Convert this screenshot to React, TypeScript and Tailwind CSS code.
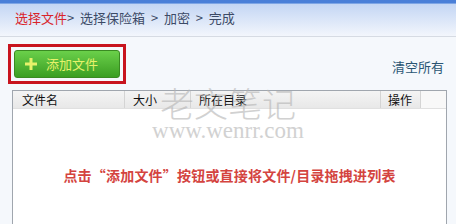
import React from "react";

const font = { fontFamily: '"Noto Sans CJK SC", "Noto Sans", sans-serif' };

function PlusIcon() {
  return (
    <svg width="12" height="12" viewBox="0 0 12 12" className="shrink-0">
      <rect x="4.5" y="0" width="3" height="12" fill="#e6f26a" />
      <rect x="0" y="4.5" width="12" height="3" fill="#e6f26a" />
    </svg>
  );
}

export default function App() {
  return (
    <div
      className="relative w-[456px] h-[224px] overflow-hidden bg-[#f5f8fc] flex flex-col"
      style={font}
    >
      {/* breadcrumb */}
      <div className="h-[37px] shrink-0 flex items-center pl-[15px] text-[13px] whitespace-pre bg-gradient-to-b from-[#4a7fd8] from-[8%] via-[#c4d6f4] via-[12%] to-[#f3f6fc] border-b border-[#d6dbe3]">
        <span className="text-[#d9242b]">选择文件</span>
        <span className="text-[#3c4a66]">&gt;  选择保险箱  &gt;  加密  &gt;  完成</span>
      </div>

      {/* toolbar */}
      <div className="h-[53px] shrink-0 flex items-center justify-between pl-[8px] pr-[12px]">
        <div className="border-[3px] border-[#c8141e] p-[3px] w-[118px] h-[40px] flex">
          <button className="flex-1 flex items-center gap-[9px] pl-[10px] rounded-[3px] bg-gradient-to-b from-[#6ad04a] to-[#3b9e22] border border-[#3a8a22] text-[13px] text-[#e6f26a]">
            <PlusIcon />
            添加文件
          </button>
        </div>
        <span className="text-[13px] text-[#2a5573] mt-[6px]">清空所有</span>
      </div>

      {/* file list */}
      <div className="flex-1 ml-[12px] mr-[9px] border border-b-0 border-[#a0a6ae] bg-white flex flex-col">
        <div className="h-[18px] shrink-0 flex text-[12px] text-[#111] bg-gradient-to-b from-[#f4f4f4] to-[#e8e8e8] border-b border-[#e0e0e0] leading-[18px]">
          <div className="w-[112px] pl-[9px] border-r border-[#d4d4d4]">文件名</div>
          <div className="w-[66px] pl-[8px] border-r border-[#d4d4d4]">大小</div>
          <div className="w-[190px] pl-[8px] border-r border-[#d4d4d4]">所在目录</div>
          <div className="w-[40px] pl-[7px] border-r border-[#d4d4d4]">操作</div>
          <div className="flex-1 bg-[#f8f8f8]" />
        </div>
        <div className="flex-1 flex justify-center pt-[56px]">
          <span className="text-[14px] font-bold text-[#d4443f] tracking-[0.2px]">
            点击“添加文件”按钮或直接将文件/目录拖拽进列表
          </span>
        </div>
      </div>

      {/* watermark */}
      <div className="absolute left-[148px] top-[84px] w-[160px] flex flex-col items-center pointer-events-none text-[#b4b4b4] opacity-60">
        <span className="text-[34px] leading-[38px] font-light">老文笔记</span>
        <span
          className="text-[23px] leading-[22px] -mt-[2px]"
          style={{ fontFamily: '"Liberation Serif", serif' }}
        >
          www.wenrr.com
        </span>
      </div>
    </div>
  );
}
